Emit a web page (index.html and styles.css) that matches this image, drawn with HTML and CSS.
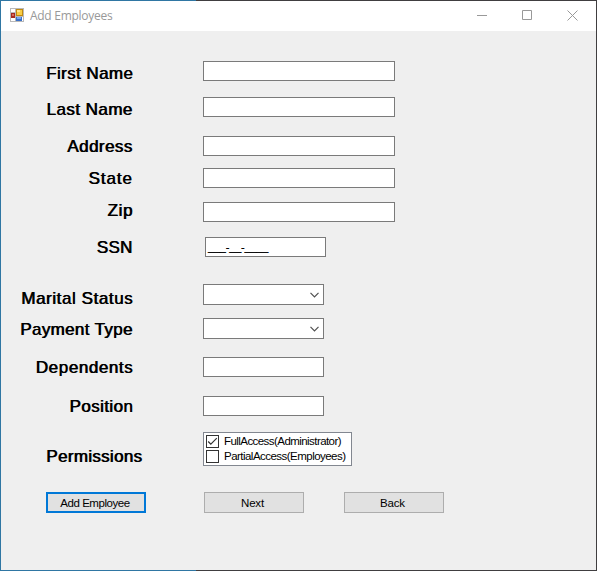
FILE: index.html
```
<!DOCTYPE html>
<html lang="en">
<head>
<meta charset="utf-8">
<title>Add Employees</title>
<link rel="stylesheet" href="styles.css">
</head>
<body>
<div class="window">
  <header class="titlebar">
    <svg class="app-icon" width="14" height="14" viewBox="0 0 14 14" shape-rendering="crispEdges">
      <path fill="#b9b9b9" d="M0 0h14v14H0z"/>
      <path fill="#fff" d="M1 1h4v3H1zM1 10h4v3H1zM12 9h1v4h-1z"/>
      <path fill="#a52a20" d="M1 5h4v5H1z"/><path fill="#d9695a" d="M2 6h2v2H2z"/>
      <path fill="#c08a10" d="M6 1h7v7H6z"/><path fill="#f8cd45" d="M7 2h5v5H7z"/><path fill="#ffe58a" d="M7 2h3v2H7z"/>
      <path fill="#3a70c8" d="M6 9h6v4H6z"/><path fill="#76a7ef" d="M7 9h4v2H7z"/>
    </svg>
    <span class="title">Add Employees</span>
    <div class="controls">
      <svg width="10" height="10" viewBox="0 0 10 10"><path d="M0 5.5h10"/></svg>
      <svg width="10" height="10" viewBox="0 0 10 10"><path d="M.5.5h9v9h-9z"/></svg>
      <svg width="11" height="11" viewBox="0 0 11 11"><path d="M.5.5l10 10M10.500.5l-10 10"/></svg>
    </div>
  </header>
  <main class="form">
    <div class="row first"><label class="low">First Name</label><div class="field wide"></div></div>
    <div class="row last"><label class="low">Last Name</label><div class="field wide"></div></div>
    <div class="row address"><label>Address</label><div class="field wide"></div></div>
    <div class="row state"><label>State</label><div class="field wide"></div></div>
    <div class="row zip"><label>Zip</label><div class="field wide"></div></div>
    <div class="row ssn"><label>SSN</label><div class="field masked">___-__-____</div></div>
    <div class="row marital"><label>Marital Status</label><div class="field combo"><svg width="9" height="6" viewBox="0 0 9 6"><path d="M.5.8l4 4 4-4"/></svg></div></div>
    <div class="row payment"><label>Payment Type</label><div class="field combo"><svg width="9" height="6" viewBox="0 0 9 6"><path d="M.5.8l4 4 4-4"/></svg></div></div>
    <div class="row dependents"><label>Dependents</label><div class="field"></div></div>
    <div class="row position"><label>Position</label><div class="field"></div></div>
    <div class="row permissions"><label>Permissions</label>
      <div class="checklist">
        <div class="option"><span class="box"><svg width="11" height="11" viewBox="0 0 11 11"><path d="M1.200 5.500l2.600 2.700 6-6"/></svg></span><span class="full">FullAccess(Administrator)</span></div>
        <div class="option"><span class="box"></span><span class="partial">PartialAccess(Employees)</span></div>
      </div>
    </div>
    <div class="buttons">
      <button class="primary">Add Employee</button>
      <button class="next">Next</button>
      <button class="back">Back</button>
    </div>
  </main>
</div>
</body>
</html>
```
FILE: styles.css
```
* { box-sizing: border-box; }
body { margin: 0; background: #3b3b3d; font-family: "Liberation Sans", Arial, sans-serif; }
.window {
  width: 597px; height: 571px; padding: 1px;
  background: linear-gradient(90deg, #2f76a3 0 196px, #403e40 196px);
  display: flex; flex-direction: column;
}
.titlebar { height: 30px; background: #fff; display: flex; align-items: center; padding: 0 18px 0 9px; }
.app-icon { margin-top: -2px; }
.title { margin-left: 6px; font: 12px/16px "Open Sans", sans-serif; letter-spacing: -.28px; color: #999; }
.controls { margin-left: auto; display: flex; align-items: center; }
.controls svg { fill: none; stroke: #999; stroke-width: 1; margin-left: 35px; margin-top: -2px; }
.form { flex: 1; background: #efefef; padding-top: 30px; }
.row { display: flex; align-items: flex-start; height: 20px; }
.row label {
  width: 133px; padding-right: 1px; margin-right: 69px;
  text-align: right; white-space: nowrap; color: #000;
  font-size: 17px; line-height: 22px; letter-spacing: .4px;
  text-shadow: .7px 0 0 #000;
}
.row label.low { margin-top: 2px; }
.field { width: 121px; height: 20px; background: #fff; border: 1px solid #7a7a7a; }
.wide { width: 192px; }
.last { margin-top: 16px; }
.address { margin-top: 19px; }
.state { margin-top: 12px; }
.row.state label { padding-right: 1.500px; letter-spacing: .9px; }
.zip { margin-top: 14px; }
.zip label { margin-top: -2px; }
.row.zip label { letter-spacing: .7px; }
.ssn { margin-top: 15px; }
.ssn label { margin-right: 71px; }
.row.last label, .row.address label { padding-right: 1.500px; letter-spacing: .45px; }
.row.payment label, .row.ssn label { padding-right: 1.500px; letter-spacing: .35px; }
.masked { padding-left: 2px; font-size: 11px; line-height: 18px; letter-spacing: -.2px; color: #000; text-shadow: 0 0 0 #000; }
.marital { margin-top: 27px; }
.marital label { margin-top: 4px; }
.row.marital label, .row.dependents label { letter-spacing: .58px; }
.payment { margin-top: 13px; }
.payment label { margin-top: 1px; }
.marital, .payment, .combo { height: 21px; }
.combo { display: flex; justify-content: flex-end; align-items: center; padding-right: 4px; }
.combo svg { fill: none; stroke: #505050; stroke-width: 1.2; }
.dependents { margin-top: 18px; }
.position { margin-top: 19px; }
.permissions { margin-top: 16px; height: 34px; }
.row.permissions label { width: 142px; margin: 14px 60px 0 0; letter-spacing: .3px; }
.checklist { width: 149px; height: 34px; background: #fff; border: 1px solid #828790; padding: 1px 2px; }
.option { display: flex; align-items: center; height: 15px; font-size: 11.500px; line-height: 15px; white-space: nowrap; }
.full { letter-spacing: -.56px; }
.partial { letter-spacing: -.53px; }
.box { width: 13px; height: 13px; border: 1px solid #333; margin-right: 5px; display: flex; flex: none; }
.box svg { fill: none; stroke: #333; stroke-width: 1.2; }
.buttons { display: flex; margin: 26px 0 0 45px; }
button {
  width: 100px; height: 21px; padding: 1px 0 0; border: 1px solid #adadad; border-radius: 0; background: #e1e1e1;
  color: #000; font: 11.500px/18px "Liberation Sans", sans-serif; letter-spacing: -.45px;
}
.primary { border: 2px solid #0078d7; line-height: 16px; padding-right: 2px; }
.next { margin-left: 58px; padding-right: 3px; }
.back { margin-left: 40px; padding-right: 3px; }
.next, .back { letter-spacing: -.2px; }
```
